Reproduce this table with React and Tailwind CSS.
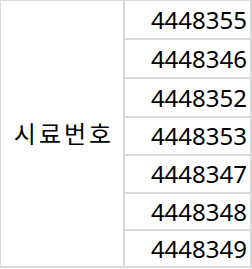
const samples = [
  { id: "4448355", h: "h-[39px]" },
  { id: "4448346", h: "h-[39px]" },
  { id: "4448352", h: "h-[39px]" },
  { id: "4448353", h: "h-[38px]" },
  { id: "4448347", h: "h-[38px]" },
  { id: "4448348", h: "h-[37px]" },
  { id: "4448349", h: "h-[35px]" },
];

export default function App() {
  return (
    <div className="w-[252px] h-[269px] bg-white font-['Noto_Sans','Noto_Sans_CJK_KR',sans-serif] text-black">
      <div className="flex border-t border-l border-r-2 border-b-2 border-[#d9d9d9]">
        {/* label cell spanning all rows */}
        <div className="w-[124px] flex items-center justify-center border-r-2 border-[#d9d9d9] text-[24px] tracking-[3px] pl-[4px]">
          시료번호
        </div>

        {/* sample numbers */}
        <div className="flex-1 flex flex-col">
          {samples.map((s, i) => (
            <div
              key={s.id}
              className={`${s.h} flex items-center justify-end pr-[3px] text-[24px] leading-none ${
                i < samples.length - 1 ? "border-b-2 border-[#d9d9d9]" : ""
              }`}
            >
              {s.id}
            </div>
          ))}
        </div>
      </div>
    </div>
  );
}
